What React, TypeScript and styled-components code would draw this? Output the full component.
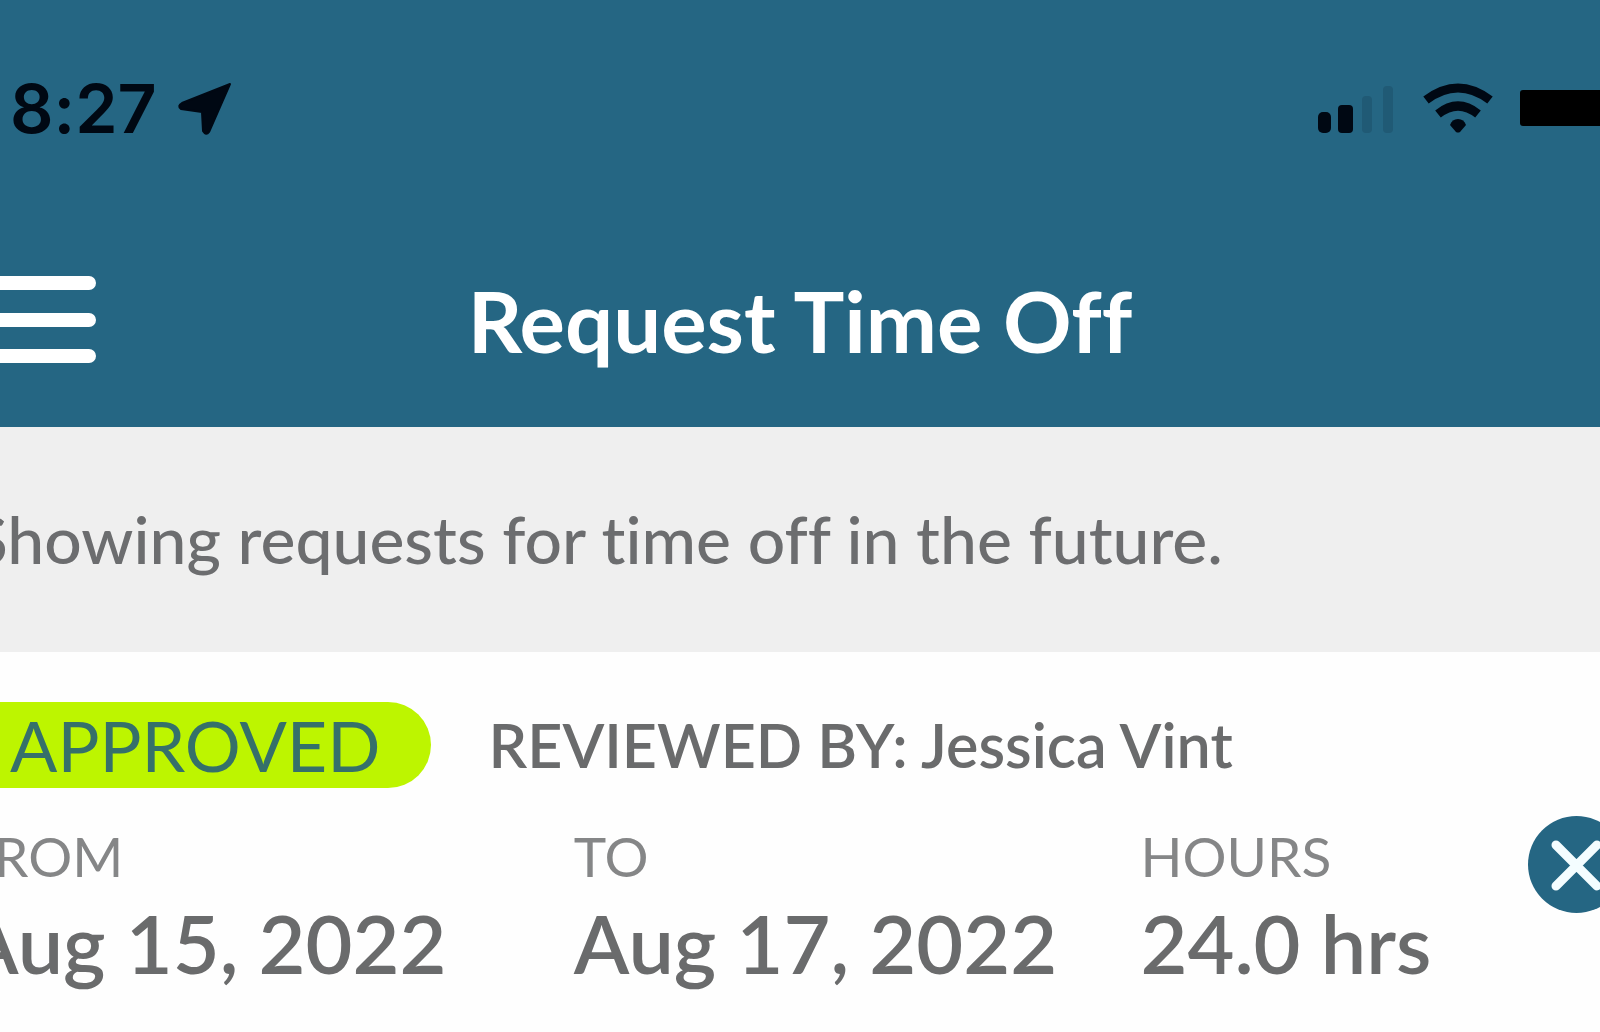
import React from "react";
import styled, { createGlobalStyle } from "styled-components";

const GlobalStyle = createGlobalStyle`
  *, *::before, *::after { box-sizing: border-box; }
  body {
    margin: 0;
    overflow-x: hidden;
    background: #fefefe;
    font-family: Lato, "Open Sans", "Liberation Sans", sans-serif;
    font-variant-ligatures: none;
  }
`;

/* The screen bleeds past both edges of the window by the same amount. */
const Screen = styled.div`
  margin: 0 -48px;
  overflow: hidden;
`;

const TopBar = styled.header`
  background: #256683;
  color: #ffffff;
`;

const StatusBar = styled.div`
  display: flex;
  align-items: center;
  justify-content: space-between;
  height: 216px;
  padding: 0 30px 0 58px;
  color: #000813;
`;

const StatusGroup = styled.div<{ $gap: number }>`
  display: flex;
  align-items: center;
  gap: ${({ $gap }) => $gap}px;
`;

const Clock = styled.time`
  font-family: Inter, "Liberation Sans", sans-serif;
  font-size: 68px;
  font-weight: 600;
  line-height: 80px;
`;

const NavBar = styled.div`
  display: grid;
  grid-template-columns: 1fr auto 1fr;
  align-items: center;
  height: 211px;
  padding-bottom: 4px;
`;

const MenuButton = styled.button`
  justify-self: start;
  display: flex;
  padding: 0;
  border: 0;
  background: none;
  color: inherit;
  cursor: pointer;
`;

const Title = styled.h1`
  margin: 0;
  font-size: 85px;
  font-weight: 700;
  line-height: 96px;
  white-space: nowrap;
`;

const Notice = styled.p`
  margin: 0;
  padding: 72px 20px 73px;
  background: #efefef;
  color: #6c6d6f;
  font-size: 66px;
  font-weight: 500;
  line-height: 80px;
  white-space: nowrap;
`;

const Request = styled.article`
  padding: 50px 23px 40px 0;
  color: #6a6b6c;
`;

const RequestHead = styled.div`
  display: flex;
  align-items: center;
  gap: 58px;
  white-space: nowrap;
`;

const Badge = styled.span`
  padding: 0 50px 0 58px;
  border-radius: 43px;
  background: #bdf500;
  color: #35706a;
  font-size: 70px;
  line-height: 86px;
`;

const Reviewer = styled.span`
  font-size: 61px;
  font-weight: 600;
  line-height: 86px;
`;

const Details = styled.div`
  display: grid;
  grid-template-columns: 610fr 566fr 387fr auto;
  align-items: start;
  padding: 28px 0 0 11px;
`;

const Fields = styled.dl`
  display: contents;
`;

const Field = styled.div`
  white-space: nowrap;
`;

const Label = styled.dt`
  color: #858687;
  font-size: 55px;
  line-height: 80px;
`;

const Value = styled.dd`
  margin: 0;
  font-size: 81px;
  font-weight: 600;
  line-height: 94px;
`;

const CancelButton = styled.button`
  display: flex;
  padding: 0;
  border: 0;
  border-radius: 50%;
  background: #256683;
  color: #f4fdff;
  cursor: pointer;
`;

const LocationIcon = () => (
  <svg width="56" height="56" viewBox="0 0 56 56" aria-hidden="true">
    <path
      d="M53 4 32 52Q29 56 26 51L25 32 4 29Q0 26 5 23Z"
      fill="currentColor"
      stroke="currentColor"
      strokeWidth="2"
      strokeLinejoin="round"
    />
  </svg>
);

const SignalIcon = () => (
  <svg width="80" height="52" viewBox="0 0 80 52" aria-hidden="true" fill="currentColor">
    <rect x="2" y="30" width="13" height="21" rx="5" />
    <rect x="22" y="23" width="15" height="28" rx="4" />
    <rect x="46" y="14" width="10" height="37" rx="4" opacity="0.12" />
    <rect x="67" y="4" width="10" height="47" rx="4" opacity="0.12" />
  </svg>
);

const WifiIcon = () => (
  <svg width="72" height="50" viewBox="0 0 72 50" aria-hidden="true">
    <g fill="none" stroke="currentColor" strokeWidth="9">
      <path d="M4 17Q36 -7 68 17" />
      <path d="M16 31Q36 15 56 31" />
    </g>
    <path d="M36 36Q42 36 44 42L38 49Q36 50 34 49L28 42Q30 36 36 36Z" fill="currentColor" />
  </svg>
);

const BatteryIcon = () => (
  <svg width="98" height="36" viewBox="0 0 98 36" aria-hidden="true">
    <rect width="98" height="36" rx="3" fill="#000000" />
  </svg>
);

const MenuIcon = () => (
  <svg width="146" height="90" viewBox="0 0 146 90" aria-hidden="true">
    <path
      d="M7 8H137M7 45H137M7 81H137"
      stroke="currentColor"
      strokeWidth="14"
      strokeLinecap="round"
    />
  </svg>
);

const CloseIcon = () => (
  <svg width="97" height="97" viewBox="0 0 97 97" aria-hidden="true">
    <path
      d="M28 29 69 70M69 29 28 70"
      stroke="currentColor"
      strokeWidth="9"
      strokeLinecap="round"
    />
  </svg>
);

const fields = [
  { label: "FROM", value: "Aug 15, 2022" },
  { label: "TO", value: "Aug 17, 2022" },
  { label: "HOURS", value: "24.0 hrs" },
];

export default function App() {
  return (
    <>
      <GlobalStyle />
      <Screen>
        <TopBar>
          <StatusBar>
            <StatusGroup $gap={20}>
              <Clock>8:27</Clock>
              <LocationIcon />
            </StatusGroup>
            <StatusGroup $gap={26}>
              <SignalIcon />
              <WifiIcon />
              <BatteryIcon />
            </StatusGroup>
          </StatusBar>
          <NavBar>
            <MenuButton type="button" aria-label="Menu">
              <MenuIcon />
            </MenuButton>
            <Title>Request Time Off</Title>
          </NavBar>
        </TopBar>
        <main>
          <Notice>Showing requests for time off in the future.</Notice>
          <Request>
            <RequestHead>
              <Badge>APPROVED</Badge>
              <Reviewer>REVIEWED BY: Jessica Vint</Reviewer>
            </RequestHead>
            <Details>
              <Fields>
                {fields.map(({ label, value }) => (
                  <Field key={label}>
                    <Label>{label}</Label>
                    <Value>{value}</Value>
                  </Field>
                ))}
              </Fields>
              <CancelButton type="button" aria-label="Cancel request">
                <CloseIcon />
              </CancelButton>
            </Details>
          </Request>
        </main>
      </Screen>
    </>
  );
}
